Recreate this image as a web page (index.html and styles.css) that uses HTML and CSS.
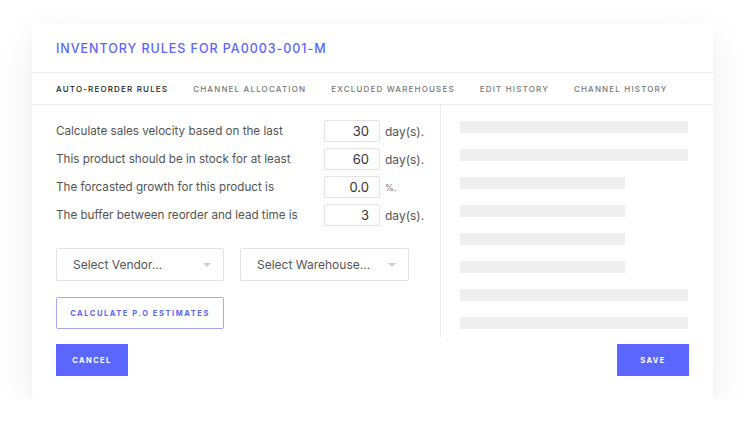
FILE: index.html
```html
<!DOCTYPE html>
<html>
<head>
<meta charset="utf-8">
<link rel="stylesheet" href="styles.css">
</head>
<body>
<div class="card">
  <div class="header"><h1 class="title">INVENTORY RULES FOR PA0003-001-M</h1></div>
  <nav class="tabs">
    <span class="tab active">AUTO-REORDER RULES</span>
    <span class="tab">CHANNEL ALLOCATION</span>
    <span class="tab">EXCLUDED WAREHOUSES</span>
    <span class="tab">EDIT HISTORY</span>
    <span class="tab">CHANNEL HISTORY</span>
  </nav>
  <div class="body">
    <div class="left">
      <div class="rules">
        <span class="label">Calculate sales velocity based on the last</span><span class="input">30</span><span class="unit">day(s).</span>
        <span class="label">This product should be in stock for at least</span><span class="input">60</span><span class="unit">day(s).</span>
        <span class="label">The forcasted growth for this product is</span><span class="input">0.0</span><span class="unit pct">%.</span>
        <span class="label">The buffer between reorder and lead time is</span><span class="input">3</span><span class="unit">day(s).</span>
      </div>
      <div class="selects">
        <div class="select"><span>Select Vendor...</span><i class="caret"></i></div>
        <div class="select"><span>Select Warehouse...</span><i class="caret"></i></div>
      </div>
      <button class="btn-outline">CALCULATE P.O ESTIMATES</button>
    </div>
    <div class="right">
      <div class="bar"></div>
      <div class="bar"></div>
      <div class="bar short"></div>
      <div class="bar short"></div>
      <div class="bar short"></div>
      <div class="bar short"></div>
      <div class="bar"></div>
      <div class="bar"></div>
    </div>
  </div>
  <div class="footer">
    <button class="btn">CANCEL</button>
    <button class="btn">SAVE</button>
  </div>
</div>
</body>
</html>
```

FILE: styles.css
```css
* { box-sizing: border-box; }
html, body { margin: 0; padding: 0; background: #fff; }
body {
  font-family: "Inter", "Liberation Sans", sans-serif;
  color: #555;
  padding: 24px 0 0 32px;
}
.card {
  width: 681px;
  height: 375px;
  background: #fff;
  border-radius: 4px;
  box-shadow: 0 12px 40px rgba(0,0,0,0.07), 0 2px 8px rgba(0,0,0,0.02);
  display: flex;
  flex-direction: column;
}
.header {
  height: 49px;
  border-bottom: 1px solid #ececec;
  padding: 0 24px;
  display: flex;
  align-items: center;
}
.title {
  margin: 0;
  font-size: 12.5px;
  font-weight: 500;
  letter-spacing: 0.96px;
  color: #5b66f6;
}
.tabs {
  height: 32px;
  border-bottom: 1px solid #ececec;
  padding: 0 24px;
  display: flex;
  align-items: center;
  gap: 25px;
}
.tab {
  font-size: 8px;
  font-weight: 500;
  letter-spacing: 1.17px;
  color: #777;
}
.tab.active { color: #222; }
.body {
  display: flex;
  height: 232px;
}
.left {
  width: 409px;
  border-right: 1px solid #ececec;
  padding: 15px 24px 0 24px;
}
.rules {
  display: grid;
  grid-template-columns: 268px 56px auto;
  grid-auto-rows: 22px;
  row-gap: 6px;
  align-items: center;
}
.label { font-size: 11.65px; color: #555; }
.input {
  height: 22px;
  border: 1px solid #e4e4e4;
  border-radius: 2px;
  font-size: 13px;
  color: #333;
  text-align: right;
  padding-right: 10px;
  line-height: 20px;
}
.unit { font-size: 12px; margin-left: 5px; color: #555; }
.unit.pct { font-size: 9px; color: #777; }
.selects {
  display: flex;
  gap: 16px;
  margin-top: 22px;
}
.select {
  height: 33px;
  width: 168px;
  border: 1px solid #e2e2e2;
  border-radius: 2px;
  display: flex;
  align-items: center;
  justify-content: space-between;
  padding: 0 12px 0 16px;
  font-size: 12px;
  color: #555;
}
.select:last-child { width: 169px; }
.caret {
  width: 0; height: 0;
  border-left: 4px solid transparent;
  border-right: 4px solid transparent;
  border-top: 4px solid #cfcfcf;
}
.btn-outline {
  display: block;
  margin-top: 16px;
  width: 168px;
  height: 32px;
  border: 1.5px solid #a3a8fb;
  border-radius: 2px;
  background: #fff;
  color: #5b66f6;
  font-family: inherit;
  font-size: 7.5px;
  font-weight: 700;
  letter-spacing: 1.56px;
  padding: 0;
}
.right {
  flex: 1;
  padding: 16px 0 0 19px;
  display: flex;
  flex-direction: column;
  gap: 16px;
}
.bar { width: 228px; height: 12px; background: #efefef; }
.bar.short { width: 165px; }
.footer {
  display: flex;
  justify-content: space-between;
  padding: 7px 24px 0 24px;
}
.btn {
  width: 72px;
  height: 32px;
  border: 0;
  background: #5b66ff;
  color: #fff;
  font-family: inherit;
  font-size: 7.5px;
  font-weight: 700;
  letter-spacing: 1.4px;
  padding: 0;
}
```
